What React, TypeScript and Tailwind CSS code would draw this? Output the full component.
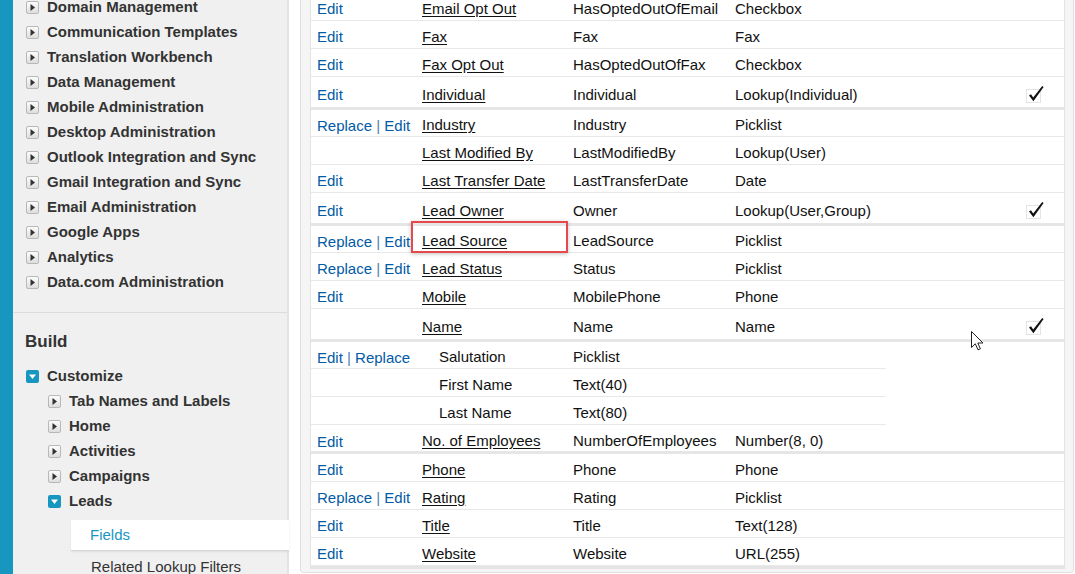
import React from 'react';

type Kind = 'normal' | 'thick' | 'sub';

interface FieldRow {
  actions: string[];
  label: string;
  api?: string;
  type: string;
  kind: Kind;
  h: string;
  check?: boolean;
}

const topItems = [
  'Domain Management',
  'Communication Templates',
  'Translation Workbench',
  'Data Management',
  'Mobile Administration',
  'Desktop Administration',
  'Outlook Integration and Sync',
  'Gmail Integration and Sync',
  'Email Administration',
  'Google Apps',
  'Analytics',
  'Data.com Administration',
];

const customizeItems = ['Tab Names and Labels', 'Home', 'Activities', 'Campaigns'];

const rows: FieldRow[] = [
  { actions: ['Edit'], label: 'Email Opt Out', api: 'HasOptedOutOfEmail', type: 'Checkbox', kind: 'normal', h: 'h-[28px]' },
  { actions: ['Edit'], label: 'Fax', api: 'Fax', type: 'Fax', kind: 'normal', h: 'h-[28px]' },
  { actions: ['Edit'], label: 'Fax Opt Out', api: 'HasOptedOutOfFax', type: 'Checkbox', kind: 'normal', h: 'h-[28px]' },
  { actions: ['Edit'], label: 'Individual', api: 'Individual', type: 'Lookup(Individual)', kind: 'thick', h: 'h-[33px]', check: true },
  { actions: ['Replace', 'Edit'], label: 'Industry', api: 'Industry', type: 'Picklist', kind: 'normal', h: 'h-[27px]' },
  { actions: [], label: 'Last Modified By', api: 'LastModifiedBy', type: 'Lookup(User)', kind: 'normal', h: 'h-[28px]' },
  { actions: ['Edit'], label: 'Last Transfer Date', api: 'LastTransferDate', type: 'Date', kind: 'normal', h: 'h-[28px]' },
  { actions: ['Edit'], label: 'Lead Owner', api: 'Owner', type: 'Lookup(User,Group)', kind: 'thick', h: 'h-[33px]', check: true },
  { actions: ['Replace', 'Edit'], label: 'Lead Source', api: 'LeadSource', type: 'Picklist', kind: 'normal', h: 'h-[27px]' },
  { actions: ['Replace', 'Edit'], label: 'Lead Status', api: 'Status', type: 'Picklist', kind: 'normal', h: 'h-[28px]' },
  { actions: ['Edit'], label: 'Mobile', api: 'MobilePhone', type: 'Phone', kind: 'normal', h: 'h-[28px]' },
  { actions: [], label: 'Name', api: 'Name', type: 'Name', kind: 'thick', h: 'h-[33px]', check: true },
  { actions: ['Edit', 'Replace'], label: 'Salutation', type: 'Picklist', kind: 'sub', h: 'h-[27px]' },
  { actions: [], label: 'First Name', type: 'Text(40)', kind: 'sub', h: 'h-[28px]' },
  { actions: [], label: 'Last Name', type: 'Text(80)', kind: 'sub', h: 'h-[28px]' },
  { actions: ['Edit'], label: 'No. of Employees', api: 'NumberOfEmployees', type: 'Number(8, 0)', kind: 'thick', h: 'h-[29px]' },
  { actions: ['Edit'], label: 'Phone', api: 'Phone', type: 'Phone', kind: 'normal', h: 'h-[28px]' },
  { actions: ['Replace', 'Edit'], label: 'Rating', api: 'Rating', type: 'Picklist', kind: 'normal', h: 'h-[28px]' },
  { actions: ['Edit'], label: 'Title', api: 'Title', type: 'Text(128)', kind: 'normal', h: 'h-[28px]' },
  { actions: ['Edit'], label: 'Website', api: 'Website', type: 'URL(255)', kind: 'normal', h: 'h-[28px]' },
];

const Collapsed = () => (
  <span className="flex h-[13px] w-[13px] shrink-0 items-center justify-center rounded-[2px] border border-[#b8b8b8] bg-linear-to-b from-[#fdfdfd] to-[#dedede]">
    <svg width="5" height="7" viewBox="0 0 5 7">
      <path d="M0.5 0 L5 3.5 L0.5 7 Z" fill="#333" />
    </svg>
  </span>
);

const Expanded = () => (
  <span className="flex h-[13px] w-[13px] shrink-0 items-center justify-center rounded-[2px] bg-[#1797c0]">
    <svg width="7" height="5" viewBox="0 0 7 5">
      <path d="M0 0.5 L7 0.5 L3.5 5 Z" fill="#fff" />
    </svg>
  </span>
);

const Check = () => (
  <svg width="19" height="18" viewBox="0 0 19 18" className="-mt-[3px]">
    <rect x="0.5" y="4.5" width="14" height="13" fill="none" stroke="#c8c8c8" strokeDasharray="1 1" />
    <path d="M3 10.5 L5 9.2 L7.2 12.4 L16.2 1 L17.6 2 L7.4 16.2 Z" fill="#111" />
  </svg>
);

const Actions = ({ actions }: { actions: string[] }) => (
  <span className="text-[#015ba7]">
    {actions.map((a, i) => (
      <React.Fragment key={a}>
        {i > 0 && <span className="text-[#4f7fb3]"> | </span>}
        <span>{a}</span>
      </React.Fragment>
    ))}
  </span>
);

const Sidebar = () => (
  <aside className="flex h-full w-[289px] shrink-0">
    <div className="w-[13px] bg-[#1797c0]" />
    <div className="flex-1 border-r-2 border-[#e3e3e3] bg-[#f0f0f0]">
      <div className="-mt-[5px] border-b border-[#dcdcdc] pb-[17px]">
        {topItems.map((item) => (
          <div key={item} className="flex h-[25px] items-center gap-[8px] pl-[13px]">
            <Collapsed />
            <span className="text-[15px] font-bold text-[#333]">{item}</span>
          </div>
        ))}
      </div>
      <div className="pt-[19px]">
        <div className="pl-[12px] text-[17px] leading-[20px] font-bold text-[#333]">Build</div>
        <div className="mt-[12px] flex h-[25px] items-center gap-[8px] pl-[13px]">
          <Expanded />
          <span className="text-[15px] font-bold text-[#333]">Customize</span>
        </div>
        {customizeItems.map((item) => (
          <div key={item} className="flex h-[25px] items-center gap-[8px] pl-[35px]">
            <Collapsed />
            <span className="text-[15px] font-bold text-[#333]">{item}</span>
          </div>
        ))}
        <div className="flex h-[25px] items-center gap-[8px] pl-[35px]">
          <Expanded />
          <span className="text-[15px] font-bold text-[#333]">Leads</span>
        </div>
        <div className="mt-[6px] -mr-[2px] ml-[58px] flex h-[31px] items-center border-b border-[#d6d6d6] bg-white pl-[19px] text-[15px] text-[#1797c0] shadow-[0_1px_2px_rgba(0,0,0,0.08)]">
          Fields
        </div>
        <div className="ml-[58px] flex h-[32px] items-center pl-[20px] text-[15px] text-[#333]">
          Related Lookup Filters
        </div>
      </div>
    </div>
  </aside>
);

const Row = ({ row }: { row: FieldRow }) => {
  if (row.kind === 'sub') {
    return (
      <div className={`${row.h} flex`}>
        <div className="flex w-[575px] items-center border-b border-[#e8e8e8] pt-[5px]">
          <div className="w-[104px] pt-[1px] pl-[6px]">
            <Actions actions={row.actions} />
          </div>
          <div className="w-[151px] pl-[24px]">{row.label}</div>
          <div className="pl-[7px]">{row.type}</div>
        </div>
      </div>
    );
  }
  const border = row.kind === 'thick' ? 'border-b-[3px] border-[#e6e6e6]' : 'border-b border-[#e8e8e8]';
  const pad = row.check ? 'pt-[6px]' : row.kind === 'thick' ? 'pt-[7px]' : 'pt-[5px]';
  return (
    <div className={`${row.h} ${border} ${pad} flex items-center`}>
      <div className="w-[104px] shrink-0 pt-[1px] pl-[6px] whitespace-nowrap">
        <Actions actions={row.actions} />
      </div>
      <div className="w-[151px] shrink-0 pl-[7px] whitespace-nowrap">
        <span className="underline underline-offset-[2px]">{row.label}</span>
      </div>
      <div className="w-[162px] shrink-0 pl-[7px] whitespace-nowrap">{row.api}</div>
      <div className="w-[291px] shrink-0 pl-[7px] whitespace-nowrap">{row.type}</div>
      <div className="flex flex-1 items-center pl-[7px]">{row.check && <Check />}</div>
    </div>
  );
};

const App: React.FC = () => {
  return (
    <div className="relative flex h-[574px] w-[1075px] overflow-hidden bg-white font-['Liberation_Sans',Arial,sans-serif]">
      <Sidebar />
      <main className="flex-1 pl-[11px]">
        <div className="mr-[1px] -mt-[7px] rounded-b-[4px] border border-t-0 border-[#e0e0e0] bg-[#f5f5f5] pr-[8px] pb-[3px] pl-[9px]">
          <div className="border-x border-b-[3px] border-[#e4e4e4] bg-white text-[15px] text-[#111]">
            {rows.map((row) => (
              <Row key={row.label} row={row} />
            ))}
          </div>
        </div>
      </main>

      {/* highlight around Lead Source */}
      <div className="pointer-events-none absolute top-[221px] left-[411px] h-[32px] w-[157px] border-2 border-[#e5484d] shadow-[0_1px_4px_rgba(0,0,0,0.25)]" />

      {/* mouse cursor */}
      <svg className="absolute top-[331px] left-[971px]" width="13" height="20" viewBox="0 0 13 20">
        <path d="M0.5 0.5 L0.5 16.5 L4.3 12.8 L7 18.8 L9.4 17.8 L6.8 12 L12 12 Z" fill="#fff" stroke="#222" strokeWidth="1" strokeLinejoin="round" />
      </svg>
    </div>
  );
};

export default App;
